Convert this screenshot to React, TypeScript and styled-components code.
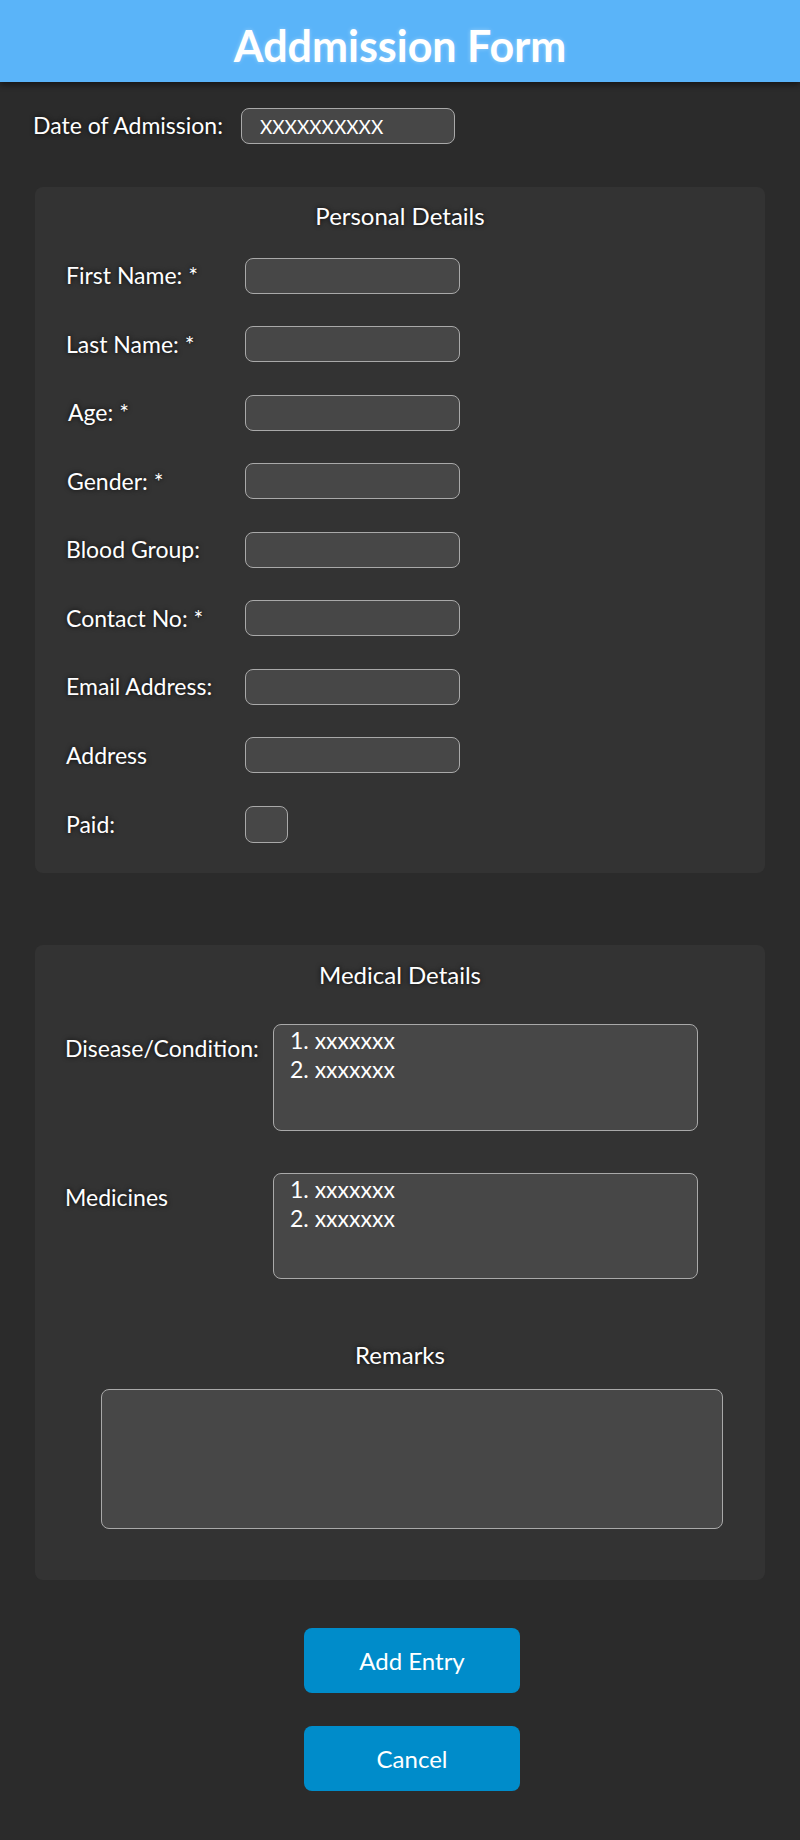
import React from "react";
import styled, { createGlobalStyle } from "styled-components";

const GlobalStyle = createGlobalStyle`
  html, body {
    margin: 0;
    padding: 0;
    background: #2b2b2b;
  }
  body {
    font-family: Lato, "Open Sans", sans-serif;
    color: #ffffff;
  }
  * { box-sizing: border-box; }
`;

const Page = styled.div`
  min-height: 1840px;
  background: #2b2b2b;
  display: flex;
  flex-direction: column;
`;

const Header = styled.header`
  height: 82px;
  background: #5ab4f9;
  box-shadow: 0 3px 6px rgba(0, 0, 0, 0.45);
  padding-top: 20px;
  text-align: center;
  position: relative;
  z-index: 1;
`;

const Title = styled.h1`
  margin: 0;
  font-family: Lato, sans-serif;
  font-weight: 700;
  font-size: 43px;
  line-height: 1.2;
  color: #ffffff;
  text-shadow: 0 0 4px rgba(255, 255, 255, 0.35);
`;

const Main = styled.main`
  display: flex;
  flex-direction: column;
  padding: 26px 35px 0;
`;

const DateRow = styled.div`
  display: flex;
  align-items: center;
  gap: 18px;
  margin-left: -2px;
`;

const Label = styled.label<{ $nudge?: number }>`
  font-size: 23px;
  line-height: 1.2;
  color: #ffffff;
  text-shadow: 0 0 5px rgba(0, 0, 0, 0.85);
  white-space: nowrap;
  margin-left: ${(p) => p.$nudge ?? 0}px;
`;

const TextField = styled.input<{ $w?: number }>`
  appearance: none;
  width: ${(p) => p.$w ?? 215}px;
  height: 36px;
  background: #474747;
  border: 1px solid #a9a9a9;
  border-radius: 8px;
  padding: 0 18px;
  font-family: Lato, sans-serif;
  font-size: 19px;
  color: #ffffff;
  outline: none;
  &::placeholder { color: #ffffff; opacity: 1; }
`;

const Panel = styled.section<{ $top: number; $bottom: number; $pad: number }>`
  background: #333333;
  border-radius: 8px;
  margin-top: ${(p) => p.$top}px;
  padding: ${(p) => p.$pad}px 0 ${(p) => p.$bottom}px;
  display: flex;
  flex-direction: column;
`;

const PanelTitle = styled.h2<{ $gap: number }>`
  margin: 0 0 ${(p) => p.$gap}px;
  text-align: center;
  font-weight: 400;
  font-size: 24px;
  line-height: 1.2;
  color: #ffffff;
  text-shadow: 0 0 5px rgba(0, 0, 0, 0.85);
`;

const FieldGrid = styled.div`
  display: grid;
  grid-template-columns: 179px 1fr;
  row-gap: 32.5px;
  align-items: center;
  padding-left: 31px;
`;

const Checkbox = styled.input`
  appearance: none;
  display: block;
  margin: 0;
  width: 43px;
  height: 37px;
  background: #474747;
  border: 1px solid #a9a9a9;
  border-radius: 8px;
`;

const AreaGrid = styled.div`
  display: grid;
  grid-template-columns: 208px 425px;
  row-gap: 42px;
  align-items: start;
  padding-left: 30px;
`;

const AreaLabel = styled(Label)`
  margin-top: 11px;
`;

const TextArea = styled.textarea<{ $h: number }>`
  display: block;
  width: 100%;
  height: ${(p) => p.$h}px;
  resize: none;
  background: #474747;
  border: 1px solid #a9a9a9;
  border-radius: 8px;
  padding: 1px 16px;
  font-family: Lato, sans-serif;
  font-size: 23px;
  line-height: 29px;
  color: #ffffff;
  outline: none;
`;

const RemarksTitle = styled(PanelTitle)`
  margin-top: 62px;
`;

const RemarksBox = styled.div`
  padding: 0 42px 0 66px;
`;

const Actions = styled.div`
  display: flex;
  flex-direction: column;
  align-items: center;
  gap: 33px;
  padding: 48px 0 0 24px;
`;

const Button = styled.button`
  width: 216px;
  height: 65px;
  border: none;
  border-radius: 8px;
  background: #008cca;
  color: #ffffff;
  font-family: Lato, sans-serif;
  font-size: 24px;
  cursor: pointer;
`;

const personalFields: { label: string; nudge?: number; kind?: "check" }[] = [
  { label: "First Name: *" },
  { label: "Last Name: *" },
  { label: "Age: *", nudge: 2 },
  { label: "Gender: *", nudge: 1 },
  { label: "Blood Group:" },
  { label: "Contact No: *" },
  { label: "Email Address:" },
  { label: "Address" },
  { label: "Paid:", kind: "check" },
];

export default function App() {
  return (
    <Page>
      <GlobalStyle />
      <Header>
        <Title>Addmission Form</Title>
      </Header>
      <Main>
        <DateRow>
          <Label>Date of Admission:</Label>
          <TextField $w={214} defaultValue="XXXXXXXXXX" />
        </DateRow>

        <Panel $top={43} $bottom={30} $pad={15}>
          <PanelTitle $gap={27}>Personal Details</PanelTitle>
          <FieldGrid>
            {personalFields.map((f) => (
              <React.Fragment key={f.label}>
                <Label $nudge={f.nudge}>{f.label}</Label>
                <div>
                  {f.kind === "check" ? <Checkbox type="checkbox" /> : <TextField />}
                </div>
              </React.Fragment>
            ))}
          </FieldGrid>
        </Panel>

        <Panel $top={72} $bottom={51} $pad={16}>
          <PanelTitle $gap={34}>Medical Details</PanelTitle>
          <AreaGrid>
            <AreaLabel>Disease/Condition:</AreaLabel>
            <TextArea $h={107} defaultValue={"1. xxxxxxx\n2. xxxxxxx"} />
            <AreaLabel>Medicines</AreaLabel>
            <TextArea $h={106} defaultValue={"1. xxxxxxx\n2. xxxxxxx"} />
          </AreaGrid>
          <RemarksTitle $gap={20}>Remarks</RemarksTitle>
          <RemarksBox>
            <TextArea $h={140} />
          </RemarksBox>
        </Panel>

        <Actions>
          <Button>Add Entry</Button>
          <Button>Cancel</Button>
        </Actions>
      </Main>
    </Page>
  );
}
